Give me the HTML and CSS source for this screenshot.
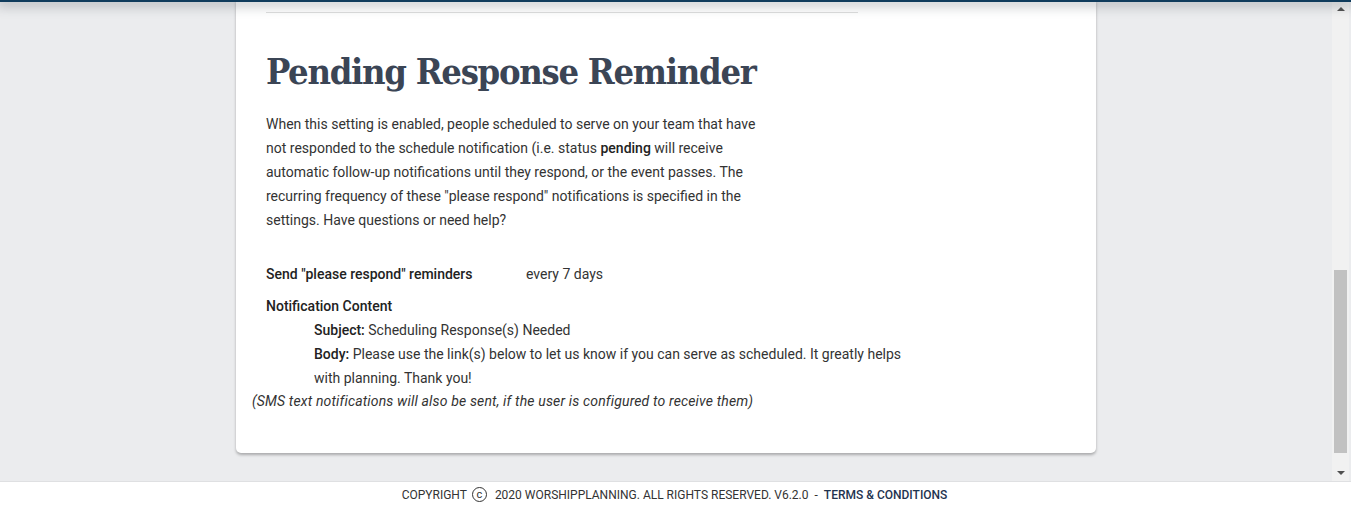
FILE: index.html
```html
<!DOCTYPE html>
<html>
<head>
<meta charset="utf-8">
<link rel="stylesheet" href="styles.css">
</head>
<body>
<div class="app">
  <div class="topbar"></div>
  <div class="viewport">
    <main class="main">
      <section class="card">
        <hr class="divider">
        <h1 class="title">Pending Response Reminder</h1>
        <p class="desc">When this setting is enabled, people scheduled to serve on your team that have not responded to the schedule notification (i.e. status <b>pending</b> will receive automatic follow-up notifications until they respond, or the event passes. The recurring frequency of these "please respond" notifications is specified in the settings. Have questions or need help?</p>
        <div class="setting-row">
          <span class="label">Send "please respond" reminders</span>
          <span class="value">every 7 days</span>
        </div>
        <div class="label content-label">Notification Content</div>
        <div class="content">
          <div><b>Subject:</b> Scheduling Response(s) Needed</div>
          <div><b>Body:</b> Please use the link(s) below to let us know if you can serve as scheduled. It greatly helps with planning. Thank you!</div>
        </div>
        <div class="note">(SMS text notifications will also be sent, if the user is configured to receive them)</div>
      </section>
    </main>
    <div class="scrollbar">
      <div class="arrow up"></div>
      <div class="track"><div class="thumb"></div></div>
      <div class="arrow down"></div>
    </div>
  </div>
  <footer class="footer">
    <span>COPYRIGHT</span><span class="copy">c</span><span>2020 WORSHIPPLANNING. ALL RIGHTS RESERVED. V6.2.0</span><span class="sep">-</span><span class="terms">TERMS &amp; CONDITIONS</span>
  </footer>
</div>
</body>
</html>
```
FILE: styles.css
```css
* { box-sizing: border-box; }
html, body { margin: 0; padding: 0; }
body {
  width: 1351px;
  height: 506px;
  overflow: hidden;
  font-family: Roboto, "Liberation Sans", Arial, sans-serif;
  background: #ebecee;
  color: #333333;
}
.app {
  position: relative;
  height: 506px;
  display: flex;
  flex-direction: column;
}
.topbar {
  position: absolute;
  left: 0;
  top: 0;
  width: 1351px;
  height: 2px;
  background: #0f3b5c;
  box-shadow: 0 1px 12px 3px rgba(60, 70, 80, 0.35);
  z-index: 5;
}
.viewport {
  height: 481px;
  display: flex;
}
.main {
  width: 1332px;
  display: flex;
  justify-content: center;
  align-items: flex-start;
  padding-bottom: 28px;
}
.card {
  width: 860px;
  height: 453px;
  background: #ffffff;
  border-radius: 0 0 5px 5px;
  box-shadow: 0 2px 3px rgba(0, 0, 0, 0.28);
  padding: 12px 30px 0 30px;
  font-size: 14px;
  line-height: 24px;
}
.divider {
  width: 592px;
  margin: 0;
  border: 0;
  border-top: 1px solid #dedede;
}
.title {
  margin: 34px 0 0 0;
  font-family: "DejaVu Serif", serif;
  font-stretch: condensed;
  font-weight: bold;
  font-size: 36px;
  line-height: 48px;
  color: #3b4555;
  letter-spacing: -1.28px;
}
.desc {
  width: 500px;
  margin: 17px 0 0 0;
}
.desc b { font-weight: 500; color: #222; }
.setting-row {
  display: flex;
  margin-top: 30px;
}
.label {
  font-weight: 500;
  color: #222;
}
.setting-row .label { width: 260px; }
.content-label { margin-top: 8px; }
.content {
  padding-left: 48px;
  width: 650px;
}
.content b { font-weight: 500; color: #222; }
.note {
  margin-left: -14px;
  margin-top: -1px;
  font-style: italic;
  letter-spacing: 0.16px;
}
.scrollbar {
  width: 17px;
  height: 481px;
  background: #f1f1f1;
  display: flex;
  flex-direction: column;
}
.arrow {
  height: 17px;
  display: flex;
  align-items: center;
  justify-content: center;
}
.arrow.up::before {
  content: "";
  border-left: 4px solid transparent;
  border-right: 4px solid transparent;
  border-bottom: 4px solid #505050;
}
.arrow.down::before {
  content: "";
  border-left: 4px solid transparent;
  border-right: 4px solid transparent;
  border-top: 4px solid #505050;
}
.track {
  flex: 1;
  display: flex;
  flex-direction: column;
  justify-content: flex-end;
  padding: 0 2px 11px 2px;
}
.thumb {
  height: 183px;
  background: #c1c1c1;
}
.footer {
  height: 25px;
  background: #ffffff;
  border-top: 1px solid #dfe0e2;
  display: flex;
  align-items: center;
  justify-content: center;
  font-size: 12px;
  color: #333;
  padding-top: 1px;
  padding-right: 2px;
}
.copy {
  display: inline-flex;
  align-items: center;
  justify-content: center;
  width: 15px;
  height: 15px;
  border: 1.5px solid #333;
  border-radius: 50%;
  font-size: 11px;
  line-height: 1;
  margin: 0 8px 0 5px;
  padding-bottom: 1px;
}
.sep { margin: 0 6px; }
.terms { color: #1f3450; font-weight: 500; }
```
